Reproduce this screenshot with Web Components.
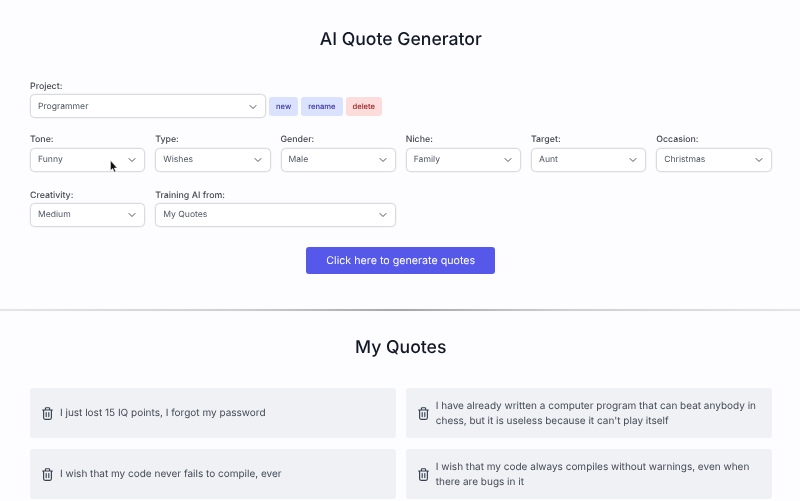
<!DOCTYPE html>
<html>
<head>
<meta charset="utf-8">
<title>AI Quote Generator</title>
<style>
  html, body { margin: 0; height: 501px; overflow: hidden; background: #fdfcfe; }
  body { font-family: Inter, "Liberation Sans", sans-serif; color: #111827; position: relative; text-rendering: geometricPrecision; }
</style>
</head>
<body>
<quote-page></quote-page>
<script>
const CHEVRON = `<svg width="10" height="10" viewBox="0 0 20 20" fill="none" stroke="#4b5563" stroke-width="2" stroke-linecap="round" stroke-linejoin="round"><path d="M4 7l6 6 6-6"/></svg>`;
const TRASH = `<svg width="11" height="13" viewBox="0 0 11 13" fill="none" stroke="#374151" stroke-width="1.15" stroke-linecap="round" stroke-linejoin="round"><path d="M.6 3h9.8M3.4 3V1.4c0-.4.3-.7.7-.7h2.8c.4 0 .7.3.7.7V3M1.6 3v7.8c0 .9.6 1.5 1.5 1.5h4.8c.9 0 1.5-.6 1.5-1.5V3M4.2 5.6v4M6.8 5.6v4"/></svg>`;

class FieldSelect extends HTMLElement {
  constructor() {
    super();
    this.attachShadow({ mode: "open" });
    const label = this.getAttribute("label");
    this.shadowRoot.innerHTML = `
<style>
  :host { display: block; }
  .label { display: block; font-size: 8.8px; line-height: 12px; font-weight: 500; color: #43484f; margin-bottom: 1.1px; height: 12px; }
  .box {
    box-sizing: border-box; height: 24px; display: flex; align-items: center; justify-content: space-between;
    padding: 1px 7px 0 7px; background: #fff; border: 1px solid #d9dbe0; border-radius: 4.5px;
    box-shadow: 0 0 0 .5px #eeeef1;
    font-size: 8.6px; color: #515865;
  }
  svg { display: block; }
</style>
<span class="label">${label}</span>
<div class="box"><span><slot></slot></span>${CHEVRON}</div>`;
  }
}
customElements.define("field-select", FieldSelect);

class TagButton extends HTMLElement {
  constructor() {
    super();
    this.attachShadow({ mode: "open" });
    this.shadowRoot.innerHTML = `
<style>
  :host { display: block; box-sizing: border-box; height: 19px; padding: 0 7px; border-radius: 3px; font-size: 7.6px; font-weight: 500; line-height: 19px; background: #dbe2fe; color: #3730a3; }
  :host([danger]) { background: #fddcdc; color: #991b1b; }
</style><slot></slot>`;
  }
}
customElements.define("tag-button", TagButton);

class QuoteCard extends HTMLElement {
  constructor() {
    super();
    this.attachShadow({ mode: "open" });
    this.shadowRoot.innerHTML = `
<style>
  :host { display: flex; box-sizing: border-box; height: 50.3px; align-items: center; gap: 7px; padding: 1px 10px 0 12px; background: #eff1f4; border-radius: 3px; font-size: 10px; line-height: 15px; color: #434a57; }
  svg { display: block; flex: none; overflow: visible; margin-top: -1px; }
</style>${TRASH}<div><slot></slot></div>`;
  }
}
customElements.define("quote-card", QuoteCard);

class QuotePage extends HTMLElement {
  constructor() {
    super();
    this.attachShadow({ mode: "open" });
    this.shadowRoot.innerHTML = `
<style>
  :host { display: block; padding: 0 28.5px 0 30px; will-change: opacity; }
  h1, h2 { margin: 0; text-align: center; font-size: 17.6px; line-height: 24px; font-weight: 500; color: #111827; }
  h1 { padding-top: 28px; }
  .project { display: flex; align-items: flex-end; gap: 3px; margin-top: 29px; }
  .project field-select { width: 236px; }
  .tags { display: flex; gap: 3px; margin-bottom: 2px; }
  .grid { display: grid; grid-template-columns: repeat(6, 1fr); gap: 18px 10px; margin-top: 16.4px; }
  .wide { grid-column: span 2; }
  .cta { display: flex; justify-content: center; margin-top: 20px; }
  .cta div { box-sizing: border-box; width: 189px; height: 27.6px; line-height: 28px; text-align: center; background: #5558e8; color: #fff; font-size: 10.7px; border-radius: 3px; }
  hr { border: 0; height: 2px; margin: 34.9px -30px 0 -30px; background: linear-gradient(90deg, #e6e6e8 0%, #cfcfd2 30%, #a6a6a8 50%, #cfcfd2 70%, #e6e6e8 100%); box-shadow: 0 0 1px rgba(0,0,0,.1); }
  h2 { margin-top: 25px; }
  .quotes { display: grid; grid-template-columns: 1fr 1fr; gap: 10.6px 10px; margin-top: 28px; }
</style>
<h1>AI Quote Generator</h1>
<div class="project">
  <field-select label="Project:">Programmer</field-select>
  <div class="tags"><tag-button>new</tag-button><tag-button>rename</tag-button><tag-button danger>delete</tag-button></div>
</div>
<div class="grid">
  <field-select label="Tone:">Funny</field-select>
  <field-select label="Type:">Wishes</field-select>
  <field-select label="Gender:">Male</field-select>
  <field-select label="Niche:">Family</field-select>
  <field-select label="Target:">Aunt</field-select>
  <field-select label="Occasion:">Christmas</field-select>
  <field-select label="Creativity:">Medium</field-select>
  <field-select class="wide" label="Training AI from:">My Quotes</field-select>
</div>
<div class="cta"><div>Click here to generate quotes</div></div>
<hr>
<h2>My Quotes</h2>
<div class="quotes">
  <quote-card>I just lost 15 IQ points, I forgot my password</quote-card>
  <quote-card>I have already written a computer program that can beat anybody in chess, but it is useless because it can't play itself</quote-card>
  <quote-card>I wish that my code never fails to compile, ever</quote-card>
  <quote-card>I wish that my code always compiles without warnings, even when there are bugs in it</quote-card>
</div>
<svg style="position:absolute;left:110px;top:160px" width="8" height="13" viewBox="0 0 8 13"><path d="M.5 .5v10l2.2-2 1.5 3.6 1.5-.6-1.5-3.5h3z" fill="#111" stroke="#fff" stroke-width=".5"/></svg>`;
  }
}
customElements.define("quote-page", QuotePage);
</script>
</body>
</html>
